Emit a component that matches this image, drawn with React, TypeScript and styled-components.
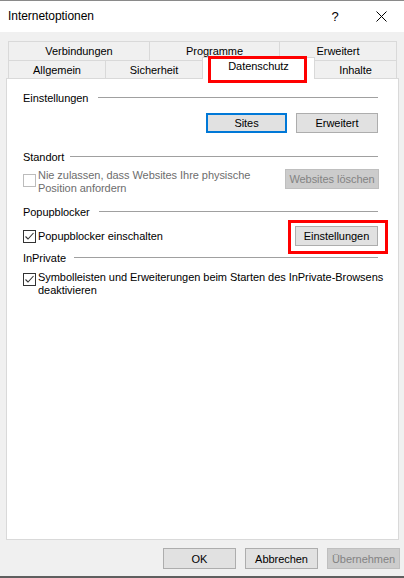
import * as React from "react";
import styled, { createGlobalStyle } from "styled-components";

const Global = createGlobalStyle`
  html, body {
    margin: 0;
    padding: 0;
    background: #ffffff;
  }
  * {
    box-sizing: border-box;
  }
`;

const Window = styled.div`
  width: 404px;
  height: 578px;
  display: flex;
  flex-direction: column;
  border-top: 1px solid #8a8a8a;
  border-bottom: 2px solid #5f5f5f;
  font-family: "Segoe UI", "Liberation Sans", Arial, sans-serif;
  font-size: 11px;
  letter-spacing: -0.05px;
  color: #000;
`;

const TitleBar = styled.div`
  height: 31px;
  flex: none;
  display: flex;
  align-items: center;
  padding-left: 8px;
  background: #ffffff;
  font-size: 12px;
`;

const Title = styled.span`
  flex: 1;
  margin-top: -1px;
`;

const HelpMark = styled.span`
  width: 46px;
  text-align: center;
  font-size: 13px;
`;

const CloseBtn = styled.span`
  width: 46px;
  display: flex;
  justify-content: center;
`;

const Body = styled.div`
  flex: 1;
  display: flex;
  flex-direction: column;
  background: #f0f0f0;
  padding-top: 9px;
`;

const TabStrip = styled.div`
  margin: 0 7px 0 8px;
  display: flex;
  flex-direction: column;
`;

const TabRow = styled.div<{ $h: number }>`
  display: flex;
  height: ${(p) => p.$h}px;
`;

const Tab = styled.div<{ $w: number; $selected?: boolean }>`
  position: relative;
  width: ${(p) => p.$w}px;
  flex: none;
  display: flex;
  align-items: center;
  justify-content: center;
  border-top: 1px solid #d9d9d9;
  border-left: 1px solid #d9d9d9;
  background: ${(p) => (p.$selected ? "#ffffff" : "#f0f0f0")};
  padding-bottom: ${(p) => (p.$selected ? "5px" : "0")};
  &:last-child {
    border-right: 1px solid #d9d9d9;
  }
  ${(p) =>
    p.$selected &&
    `
    margin-top: -3px;
    height: 22px;
    z-index: 2;
    border-right: 1px solid #d9d9d9;
    & + div { border-left: none; }
  `}
`;

const Highlight = styled.div<{ $l: number; $t: number; $w: number; $h: number }>`
  position: absolute;
  left: ${(p) => p.$l}px;
  top: ${(p) => p.$t}px;
  width: ${(p) => p.$w}px;
  height: ${(p) => p.$h}px;
  border: 3px solid #ff0000;
  pointer-events: none;
`;

const Panel = styled.div`
  flex: 1;
  margin: 0 5px 0 6px;
  background: #ffffff;
  border: 1px solid #d9d9d9;
  padding: 11px 19px 0 16px;
  display: flex;
  flex-direction: column;
`;

const SectionHeader = styled.div<{ $top: number }>`
  display: flex;
  align-items: center;
  height: 15px;
  margin-top: ${(p) => p.$top}px;
`;

const SectionLabel = styled.span<{ $w: number }>`
  width: ${(p) => p.$w}px;
  flex: none;
  white-space: nowrap;
`;

const Rule = styled.div`
  flex: 1;
  height: 1px;
  background: #a0a0a0;
  margin-right: 1px;
`;

const ButtonRow = styled.div<{ $top: number }>`
  display: flex;
  justify-content: flex-end;
  gap: 9px;
  margin-top: ${(p) => p.$top}px;
  margin-right: 1px;
`;

const Button = styled.button<{ $w: number; $h?: number; $default?: boolean }>`
  width: ${(p) => p.$w}px;
  height: ${(p) => (p.$h ? p.$h : 20)}px;
  flex: none;
  padding: 0;
  font: inherit;
  letter-spacing: inherit;
  white-space: nowrap;
  color: #000;
  background: #e1e1e1;
  border: ${(p) => (p.$default ? "2px solid #0078d7" : "1px solid #adadad")};
  &:disabled {
    background: #cccccc;
    border-color: #bfbfbf;
    color: #838383;
  }
`;

const OptionRow = styled.div<{ $top: number; $align: string }>`
  display: flex;
  align-items: ${(p) => p.$align};
  justify-content: space-between;
  margin-top: ${(p) => p.$top}px;
`;

const Check = styled.label<{ $disabled?: boolean }>`
  display: flex;
  align-items: flex-start;
  color: ${(p) => (p.$disabled ? "#6d6d6d" : "#000")};
  line-height: 13px;
`;

const Box = styled.span<{ $disabled?: boolean; $off: number }>`
  width: 13px;
  height: 13px;
  flex: none;
  margin-top: ${(p) => p.$off}px;
  margin-right: 2px;
  background: #ffffff;
  border: 1px solid ${(p) => (p.$disabled ? "#bcbcbc" : "#333333")};
  display: flex;
`;

const CheckText = styled.span`
  white-space: nowrap;
`;

const Anchor = styled.div`
  position: relative;
  margin-right: 1px;
`;

const Footer = styled.div`
  flex: none;
  display: flex;
  justify-content: flex-end;
  gap: 9px;
  padding: 8px 4px 7px 0;
`;

const Tick = () => (
  <svg width="11" height="11" viewBox="0 0 11 11">
    <polyline points="1.5,5.5 4,8 9.5,2" fill="none" stroke="#333" strokeWidth="1.1" />
  </svg>
);

const CheckBox = ({ checked, disabled, off }: { checked?: boolean; disabled?: boolean; off: number }) => (
  <Box $disabled={disabled} $off={off}>
    {checked && <Tick />}
  </Box>
);

export default function App() {
  return (
    <>
      <Global />
      <Window>
        <TitleBar>
          <Title>Internetoptionen</Title>
          <HelpMark>?</HelpMark>
          <CloseBtn>
            <svg width="11" height="11" viewBox="0 0 11 11">
              <path d="M0.5 0.5 L10.5 10.5 M10.5 0.5 L0.5 10.5" stroke="#000" strokeWidth="1" />
            </svg>
          </CloseBtn>
        </TitleBar>
        <Body>
          <TabStrip>
            <TabRow $h={19}>
              <Tab $w={141}>Verbindungen</Tab>
              <Tab $w={130}>Programme</Tab>
              <Tab $w={118}>Erweitert</Tab>
            </TabRow>
            <TabRow $h={18}>
              <Tab $w={97}>Allgemein</Tab>
              <Tab $w={97}>Sicherheit</Tab>
              <Tab $w={113} $selected>
                Datenschutz
                <Highlight $l={5} $t={-2} $w={99} $h={27} />
              </Tab>
              <Tab $w={82}>Inhalte</Tab>
            </TabRow>
          </TabStrip>
          <Panel>
            <SectionHeader $top={0}>
              <SectionLabel $w={75}>Einstellungen</SectionLabel>
              <Rule />
            </SectionHeader>
            <ButtonRow $top={8}>
              <Button $w={81} $default>Sites</Button>
              <Button $w={82}>Erweitert</Button>
            </ButtonRow>

            <SectionHeader $top={16}>
              <SectionLabel $w={47}>Standort</SectionLabel>
              <Rule />
            </SectionHeader>
            <OptionRow $top={5} $align="flex-start">
              <Check $disabled>
                <CheckBox disabled off={5} />
                <CheckText>
                  Nie zulassen, dass Websites Ihre physische
                  <br />
                  Position anfordern
                </CheckText>
              </Check>
              <Button $w={94} disabled>Websites löschen</Button>
            </OptionRow>

            <SectionHeader $top={9}>
              <SectionLabel $w={76}>Popupblocker</SectionLabel>
              <Rule />
            </SectionHeader>
            <OptionRow $top={7} $align="center">
              <Check>
                <CheckBox checked off={0} />
                <CheckText>Popupblocker einschalten</CheckText>
              </Check>
              <Anchor>
                <Button $w={83}>Einstellungen</Button>
                <Highlight $l={-7} $t={-6} $w={100} $h={34} />
              </Anchor>
            </OptionRow>

            <SectionHeader $top={4}>
              <SectionLabel $w={51}>InPrivate</SectionLabel>
              <Rule />
            </SectionHeader>
            <OptionRow $top={6} $align="flex-start">
              <Check>
                <CheckBox checked off={2} />
                <CheckText>
                  Symbolleisten und Erweiterungen beim Starten des InPrivate-Browsens
                  <br />
                  deaktivieren
                </CheckText>
              </Check>
            </OptionRow>
          </Panel>
          <Footer>
            <Button $w={73} $h={21}>OK</Button>
            <Button $w={73} $h={21}>Abbrechen</Button>
            <Button $w={73} $h={21} disabled>Übernehmen</Button>
          </Footer>
        </Body>
      </Window>
    </>
  );
}
